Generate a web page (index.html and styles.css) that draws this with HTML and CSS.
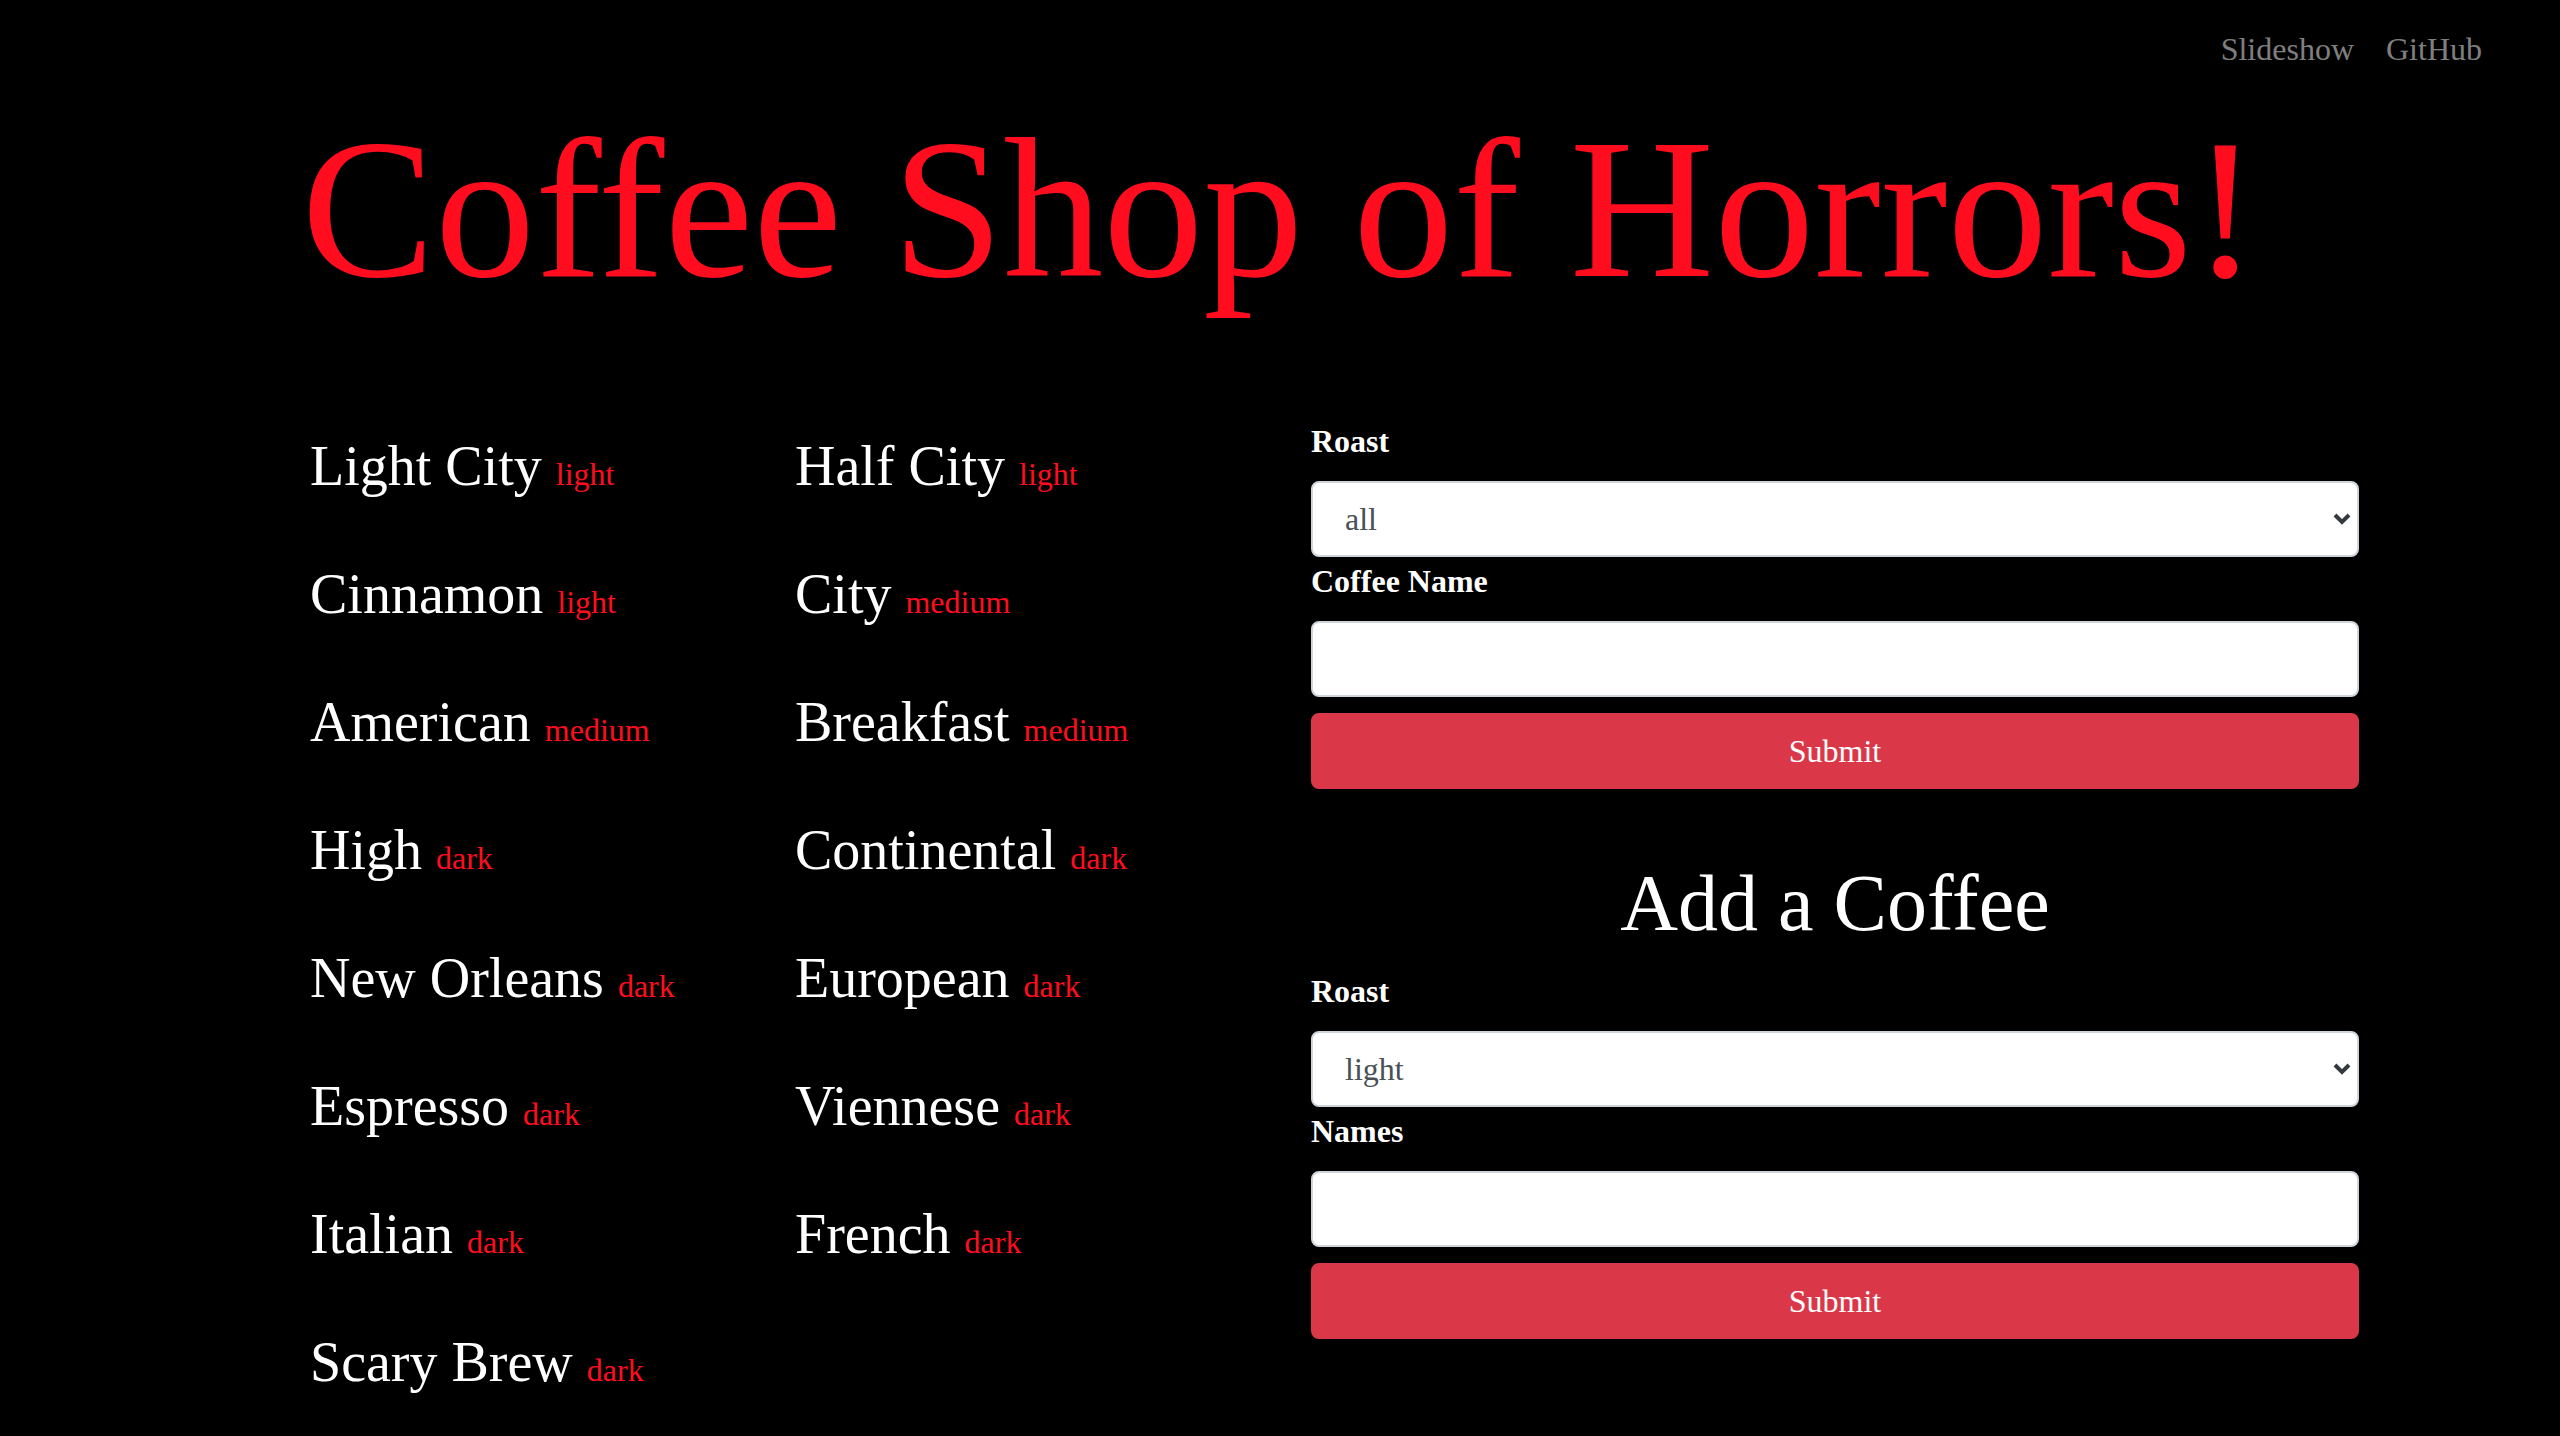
FILE: index.html
```html
<!DOCTYPE html>
<html lang="en">
<head>
<meta charset="utf-8">
<title>Coffee Shop of Horrors!</title>
<link rel="stylesheet" href="styles.css">
</head>
<body>
<nav class="topnav">
  <a class="nav-link" href="#">Slideshow</a>
  <a class="nav-link" href="#">GitHub</a>
</nav>
<h1 class="title">Coffee Shop of Horrors!</h1>
<main class="main">
  <section class="coffee-list">
    <h3 class="coffee">Light City <span class="roast">light</span></h3>
    <h3 class="coffee">Half City <span class="roast">light</span></h3>
    <h3 class="coffee">Cinnamon <span class="roast">light</span></h3>
    <h3 class="coffee">City <span class="roast">medium</span></h3>
    <h3 class="coffee">American <span class="roast">medium</span></h3>
    <h3 class="coffee">Breakfast <span class="roast">medium</span></h3>
    <h3 class="coffee">High <span class="roast">dark</span></h3>
    <h3 class="coffee">Continental <span class="roast">dark</span></h3>
    <h3 class="coffee">New Orleans <span class="roast">dark</span></h3>
    <h3 class="coffee">European <span class="roast">dark</span></h3>
    <h3 class="coffee">Espresso <span class="roast">dark</span></h3>
    <h3 class="coffee">Viennese <span class="roast">dark</span></h3>
    <h3 class="coffee">Italian <span class="roast">dark</span></h3>
    <h3 class="coffee">French <span class="roast">dark</span></h3>
    <h3 class="coffee">Scary Brew <span class="roast">dark</span></h3>
  </section>
  <section class="forms">
    <form class="form">
      <label class="label" for="roast-search">Roast</label>
      <div class="select-wrap">
        <select class="control select" id="roast-search">
          <option>all</option>
          <option>light</option>
          <option>medium</option>
          <option>dark</option>
        </select>
        <svg class="chevron" width="18" height="12" viewBox="0 0 18 12"><path d="M2 2 L9 9 L16 2" fill="none" stroke="#343a40" stroke-width="4"/></svg>
      </div>
      <label class="label" for="coffee-name">Coffee Name</label>
      <input class="control" id="coffee-name" type="text">
      <button class="btn" type="button">Submit</button>
    </form>
    <h1 class="add-title">Add a Coffee</h1>
    <form class="form">
      <label class="label" for="roast-add">Roast</label>
      <div class="select-wrap">
        <select class="control select" id="roast-add">
          <option>light</option>
          <option>medium</option>
          <option>dark</option>
        </select>
        <svg class="chevron" width="18" height="12" viewBox="0 0 18 12"><path d="M2 2 L9 9 L16 2" fill="none" stroke="#343a40" stroke-width="4"/></svg>
      </div>
      <label class="label" for="names">Names</label>
      <input class="control" id="names" type="text">
      <button class="btn" type="button">Submit</button>
    </form>
  </section>
</main>
</body>
</html>
```

FILE: styles.css
```css
html, body {
  margin: 0;
  padding: 0;
  background: #000;
  overflow: hidden;
}
body {
  font-family: "Liberation Serif", "Times New Roman", serif;
  color: #fff;
  height: 1436px;
}
.topnav {
  display: flex;
  justify-content: flex-end;
  gap: 32px;
  padding: 25px 78px 0 0;
  height: 48px;
}
.nav-link {
  font-size: 32px;
  line-height: 48px;
  color: rgba(255, 255, 255, 0.5);
  text-decoration: none;
}
.title {
  margin: 16px 0 0;
  font-size: 200px;
  line-height: 240px;
  font-weight: normal;
  color: #ff0d1f;
  text-align: center;
}
.main {
  display: flex;
  margin-top: 88px;
  padding-left: 310px;
}
.coffee-list {
  display: grid;
  grid-template-columns: 485px 485px;
  grid-auto-rows: 67px;
  row-gap: 61px;
  padding-top: 16px;
  width: 970px;
}
.coffee {
  margin: 0;
  font-size: 56px;
  line-height: 67px;
  font-weight: normal;
  white-space: nowrap;
}
.roast {
  font-size: 32px;
  color: #ff0d1f;
}
.forms {
  margin-left: 31px;
  width: 1048px;
}
.form {
  display: flex;
  flex-direction: column;
}
.label {
  display: block;
  font-size: 32px;
  line-height: 48px;
  font-weight: bold;
  margin-bottom: 16px;
}
.select-wrap {
  position: relative;
}
.control {
  box-sizing: border-box;
  display: block;
  width: 100%;
  height: 76px;
  margin: 0;
  padding: 0 32px;
  border: 2px solid #ced4da;
  border-radius: 8px;
  background: #fff;
  font-family: "Liberation Serif", "Times New Roman", serif;
  font-size: 32px;
  color: #495057;
  outline: none;
}
.select {
  appearance: none;
  -webkit-appearance: none;
}
.chevron {
  position: absolute;
  right: 8px;
  top: 32px;
  pointer-events: none;
}
.btn {
  box-sizing: border-box;
  display: block;
  width: 100%;
  height: 76px;
  margin-top: 16px;
  border: 2px solid #da3849;
  border-radius: 8px;
  background: #da3849;
  color: #fff;
  font-family: "Liberation Serif", "Times New Roman", serif;
  font-size: 32px;
  line-height: 48px;
  padding: 0;
}
.add-title {
  margin: 66px 0 16px;
  font-size: 80px;
  line-height: 96px;
  font-weight: normal;
  text-align: center;
}
```
